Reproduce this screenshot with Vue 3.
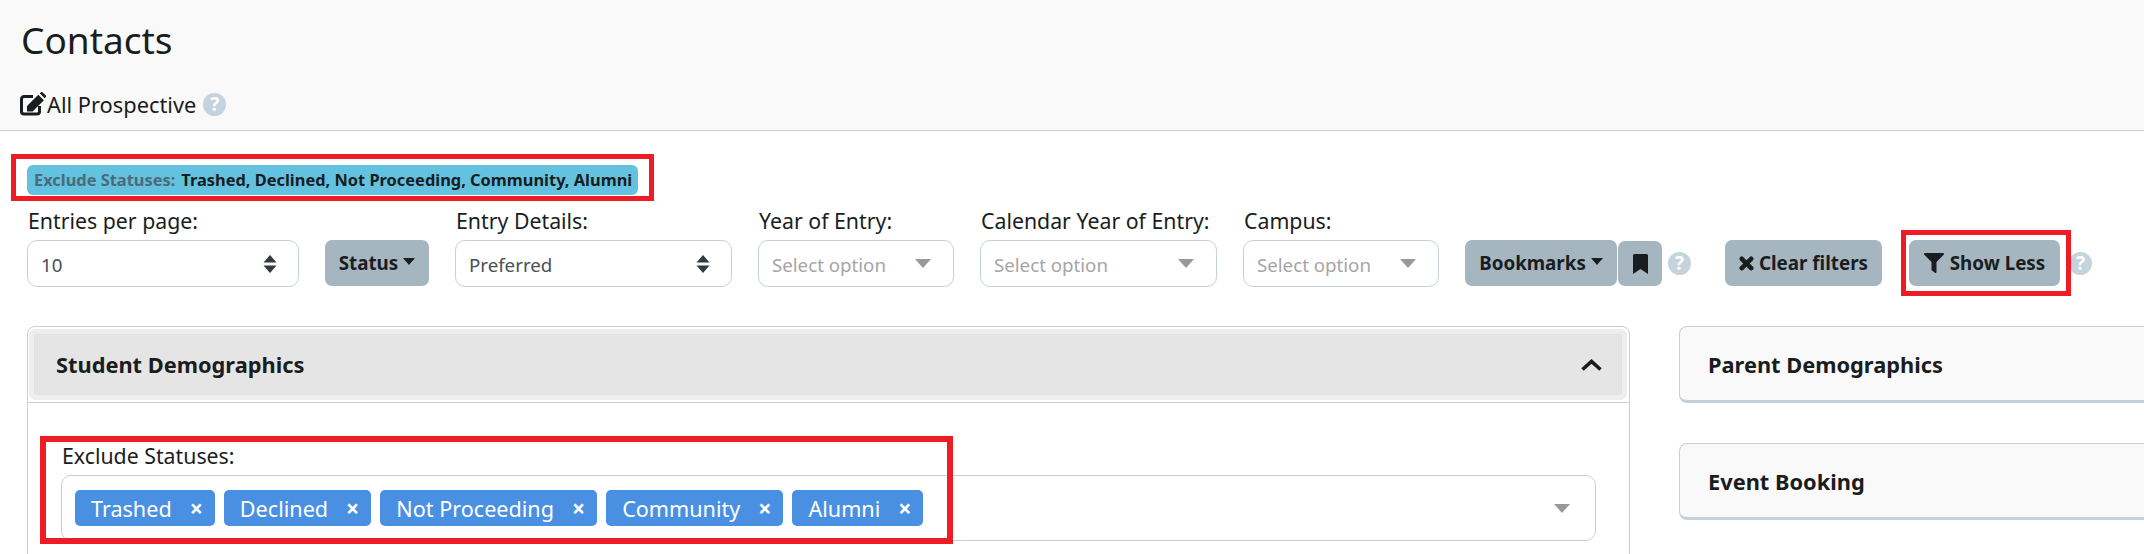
<script setup>
const fields = [
  { label: 'Year of Entry:', width: '196px' },
  { label: 'Calendar Year of Entry:', width: '237px' },
  { label: 'Campus:', width: '196px' }
]
const tags = ['Trashed', 'Declined', 'Not Proceeding', 'Community', 'Alumni']
</script>

<template>
  <div class="page">
    <header class="head">
      <h1>Contacts</h1>
      <div class="view">
        <svg class="edit" viewBox="0 0 26 24" width="26" height="24">
          <path d="M13 4.500H4A2.500 2.500 0 0 0 1.500 7v12.500A2.500 2.500 0 0 0 4 22h13a2.500 2.500 0 0 0 2.500-2.500V14" fill="none" stroke="#1a1d20" stroke-width="3"/>
          <path d="M7 19.500v-5.500L18.300 2.700l5.600 5.600L12.600 19.500zM19.800 1.300l.9-.9a1.400 1.400 0 0 1 2 0l2.900 2.900a1.400 1.400 0 0 1 0 2l-.9.900z" fill="#1a1d20"/>
        </svg>
        <span class="view-name">All Prospective</span>
        <span class="help">?</span>
      </div>
    </header>

    <div class="badge-row">
      <span class="badge"><span class="badge-key">Exclude Statuses:</span><span>Trashed, Declined, Not Proceeding, Community, Alumni</span></span>
      <i class="mark mark-badge"></i>
    </div>

    <div class="filters">
      <div class="field" style="width:272px">
        <label>Entries per page:</label>
        <div class="select">
          <span>10</span>
          <svg class="updown" viewBox="0 0 14 18" width="14" height="18"><path d="M7 0l6.500 7.500H.5zM7 18l6.500-7.500H.5z" fill="#343a40"/></svg>
        </div>
      </div>
      <button class="btn status">Status<i class="caret"></i></button>
      <div class="field" style="width:277px">
        <label>Entry Details:</label>
        <div class="select">
          <span>Preferred</span>
          <svg class="updown" viewBox="0 0 14 18" width="14" height="18"><path d="M7 0l6.500 7.500H.5zM7 18l6.500-7.500H.5z" fill="#343a40"/></svg>
        </div>
      </div>
      <div v-for="f in fields" :key="f.label" class="field" :style="{ width: f.width }">
        <label>{{ f.label }}</label>
        <div class="select placeholder">
          <span>Select option</span>
          <i class="down"></i>
        </div>
      </div>
      <div class="actions">
        <button class="btn bookmarks">Bookmarks<i class="caret"></i></button>
        <button class="btn bookmark-icon">
          <svg viewBox="0 0 15 20" width="15" height="20"><path d="M1.500 0h12A1.500 1.500 0 0 1 15 1.500V20l-7.500-5L0 20V1.500A1.500 1.500 0 0 1 1.500 0z" fill="#1a1d20"/></svg>
        </button>
        <span class="help small">?</span>
        <button class="btn clear">
          <svg viewBox="0 0 15 15" width="15" height="15"><path d="M2.800 2.800l9.400 9.400M12.200 2.800l-9.400 9.400" fill="none" stroke="#1a1d20" stroke-width="4.600" stroke-linecap="round"/></svg>
          Clear filters
        </button>
        <div class="less-wrap">
          <button class="btn less">
            <svg viewBox="0 0 20 20" width="20" height="20"><path d="M1 0h18a1 1 0 0 1 .7 1.700L12.500 9v10a1 1 0 0 1-1.600.8L8 17.500a1 1 0 0 1-.5-.8V9L.3 1.700A1 1 0 0 1 1 0z" fill="#1a1d20"/></svg>
            Show Less
          </button>
          <i class="mark mark-less"></i>
        </div>
        <span class="help small last">?</span>
      </div>
    </div>

    <main class="panels">
      <section class="panel open">
        <div class="panel-head">
          <div class="panel-head-inner">
            <span>Student Demographics</span>
            <svg viewBox="0 0 21 12" width="21" height="12"><path d="M1.500 10.500 10.500 2.500l9 8" fill="none" stroke="#1a1d20" stroke-width="3.600"/></svg>
          </div>
        </div>
        <div class="panel-body">
          <label>Exclude Statuses:</label>
          <div class="multi">
            <span v-for="t in tags" :key="t" class="tag">{{ t }}<b>×</b></span>
            <i class="down"></i>
          </div>
          <i class="mark mark-multi"></i>
        </div>
      </section>
      <aside class="side">
        <section class="panel closed">Parent Demographics</section>
        <section class="panel closed">Event Booking</section>
      </aside>
    </main>
  </div>
</template>

<style>
html, body { margin: 0; overflow: hidden; background: #fff; }
</style>

<style scoped>
.page {
  width: 2144px;
  height: 554px;
  overflow: hidden;
  font-family: "Noto Sans", sans-serif;
  font-size: 21px;
  color: #1a1d20;
}
.head {
  height: 131px;
  padding: 16px 0 0 20px;
  background: #f9f9f9;
  border-bottom: 1px solid #c5d1da;
  box-sizing: border-box;
}
h1 {
  margin: 0 0 0 1px;
  font-size: 37px;
  font-weight: 400;
  line-height: 48px;
}
.view {
  margin-top: 26px;
  display: flex;
  align-items: center;
  height: 28px;
  font-size: 21.800px;
}
.edit { flex: none; }
.view-name { margin-left: 1px; }
.help {
  display: inline-flex;
  align-items: center;
  justify-content: center;
  width: 23px;
  height: 23px;
  margin-left: 7px;
  border-radius: 50%;
  background: #c5d3dd;
  color: #fff;
  font-size: 19px;
  font-weight: 700;
  line-height: 1;
}
.badge-row {
  position: relative;
  padding: 33px 0 0 27px;
  height: 30px;
}
.badge {
  display: inline-flex;
  gap: 6px;
  align-items: center;
  height: 30px;
  padding: 0 6px 0 7px;
  border-radius: 6px;
  background: #62c2e0;
  font-size: 16.400px;
  font-weight: 700;
  line-height: 30px;
  white-space: nowrap;
}
.badge-key { color: #4d6a78; }
.mark {
  position: absolute;
  display: block;
  border: 5px solid #ee1c25;
  box-sizing: border-box;
  pointer-events: none;
}
.mark-badge { left: 11px; top: 23px; width: 643px; height: 47px; }
.filters {
  display: flex;
  align-items: flex-start;
  gap: 26px;
  padding: 12px 0 0 27px;
}
.field { flex: none; }
.field label, .panel-body label {
  display: block;
  font-size: 21.300px;
  line-height: 28px;
  padding-top: 1px;
  margin: 0 0 5px 1px;
  white-space: nowrap;
}
.select {
  display: flex;
  align-items: center;
  justify-content: space-between;
  height: 47px;
  box-sizing: border-box;
  padding: 2px 21px 0 13px;
  border: 1px solid #c5d1da;
  border-radius: 10px;
  background: #fff;
  color: #495057;
  font-size: 18.700px;
}
.select.placeholder { color: #a5a5a5; padding: 2px 22px 0 13px; }
.updown { margin-top: -2px; }
.down {
  width: 0;
  height: 0;
  border-left: 8px solid transparent;
  border-right: 8px solid transparent;
  border-top: 9px solid #999;
  margin-top: -2px;
}
.btn {
  display: inline-flex;
  align-items: center;
  justify-content: center;
  height: 46px;
  margin: 0;
  padding: 0;
  border: 0;
  border-radius: 7px;
  background: #a5b6c0;
  color: #1a1d20;
  font-family: inherit;
  font-size: 18.800px;
  font-weight: 700;
  white-space: nowrap;
  flex: none;
}
.status { width: 104px; margin-top: 34px; }
.caret {
  width: 0;
  height: 0;
  margin: -4px 0 0 5px;
  border-left: 6px solid transparent;
  border-right: 6px solid transparent;
  border-top: 7px solid #1a1d20;
}
.actions {
  display: flex;
  align-items: flex-start;
  margin-top: 34px;
  flex: none;
}
.bookmarks { width: 152px; }
.bookmark-icon { width: 44px; height: 45px; margin: 1px 0 0 1px; }
.help.small { margin: 12px 0 0 6px; }
.clear { width: 157px; margin-left: 34px; gap: 5px; }
.less-wrap { position: relative; margin-left: 27px; }
.less { width: 151px; gap: 6px; }
.mark-less { left: -8px; top: -10px; width: 170px; height: 66px; }
.help.last { margin-left: 9px; }
.panels {
  display: flex;
  align-items: flex-start;
  gap: 49px;
  padding: 39px 0 0 27px;
}
.panel {
  box-sizing: border-box;
  border: 1px solid #c5d1da;
  border-radius: 8px;
  background: #fff;
}
.open { width: 1603px; height: 300px; flex: none; }
.panel-head {
  padding: 2px 2px 2px 1px;
  height: 76px;
  box-sizing: border-box;
  border-bottom: 1px solid #c5d1da;
}
.panel-head-inner {
  height: 71px;
  box-sizing: border-box;
  display: flex;
  align-items: center;
  justify-content: space-between;
  padding: 0 25px 0 27px;
  border-radius: 8px;
  background: #e5e5e5;
  box-shadow: inset 0 0 0 5px #eeeeee, inset 0 0 0 6px #e1e1e1;
  font-size: 21.800px;
  font-weight: 700;
}
.panel-body {
  position: relative;
  padding: 38px 33px 0 33px;
}
.mark-multi { left: 12px; top: 33px; width: 913px; height: 108px; border-width: 6px; }
.multi {
  display: flex;
  align-items: center;
  gap: 9px;
  height: 66px;
  box-sizing: border-box;
  padding: 0 25px 0 13px;
  border: 1px solid #c5d1da;
  border-radius: 10px;
}
.tag {
  display: inline-flex;
  align-items: center;
  height: 36px;
  padding: 0 12px 0 16px;
  border-radius: 5px;
  background: #4a90e2;
  color: #fff;
  font-size: 21.600px;
  white-space: nowrap;
}
.tag b { margin-left: 18px; font-size: 23px; font-weight: 700; line-height: 1; }
.multi .down { margin-left: auto; margin-top: 0; }
.side {
  display: flex;
  flex-direction: column;
  gap: 40px;
  width: 520px;
  flex: none;
}
.closed {
  height: 77px;
  padding: 2px 0 0 28px;
  display: flex;
  align-items: center;
  background: #f9f9f9;
  border-bottom-width: 3px;
  border-right: 0;
  border-radius: 8px 0 0 8px;
  font-size: 21.800px;
  font-weight: 700;
}
</style>
